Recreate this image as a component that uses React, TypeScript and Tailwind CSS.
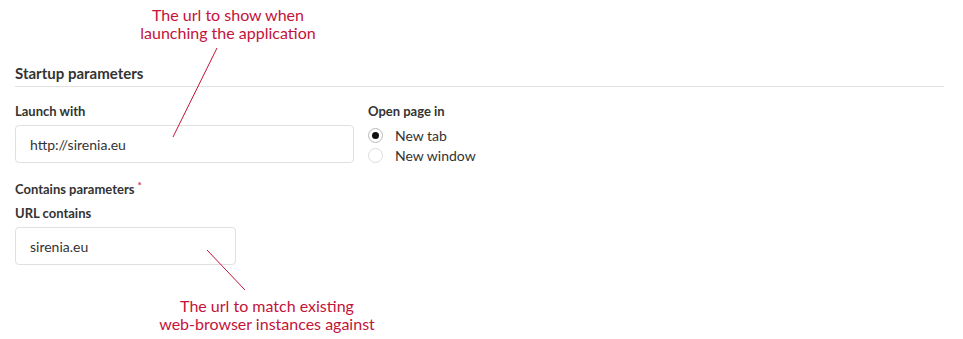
import { useState } from 'react'

const red = 'text-[#c4123a]'

function Radio({ checked, label, onClick }: { checked: boolean; label: string; onClick: () => void }) {
  return (
    <button type="button" onClick={onClick} className="flex items-center h-[20px] gap-[12px] text-left">
      <span
        className={`w-[15px] h-[15px] rounded-full border flex items-center justify-center bg-white ${
          checked ? 'border-[#bbb]' : 'border-[#ddd]'
        }`}
      >
        {checked && <span className="w-[7px] h-[7px] rounded-full bg-[#111]" />}
      </span>
      <span className="text-[14px] text-[#333]">{label}</span>
    </button>
  )
}

export default function App() {
  const [target, setTarget] = useState<'tab' | 'window'>('tab')
  const [launch, setLaunch] = useState('http://sirenia.eu')
  const [contains, setContains] = useState('sirenia.eu')

  return (
    <div className="relative w-[963px] h-[339px] bg-white font-['Lato',sans-serif] text-[#333] overflow-hidden">
      {/* top callout */}
      <div className={`pt-[6px] ml-[78px] w-[300px] text-center text-[16px] leading-[18px] ${red}`}>
        <p>The url to show when</p>
        <p>launching the application</p>
      </div>

      <div className="pl-[15px] pr-[19px]">
        <h2 className="mt-[22px] pb-[4px] text-[15px] leading-[18px] font-bold border-b border-[#e2e2e2]">
          Startup parameters
        </h2>

        <div className="flex items-start gap-[14px] mt-[16px]">
          <div className="w-[339px]">
            <label className="block text-[13px] leading-[16px] font-bold mb-[6px]">Launch with</label>
            <input
              value={launch}
              onChange={e => setLaunch(e.target.value)}
              className="w-full h-[38px] px-[14px] text-[14px] border border-[#e0e0e0] rounded-[4px] outline-none"
            />
          </div>
          <div className="h-[60px]">
            <p className="text-[13px] leading-[16px] font-bold">Open page in</p>
            <div className="mt-[6px] flex flex-col">
              <Radio checked={target === 'tab'} label="New tab" onClick={() => setTarget('tab')} />
              <Radio checked={target === 'window'} label="New window" onClick={() => setTarget('window')} />
            </div>
          </div>
        </div>

        <p className="mt-[18px] text-[13px] leading-[16px] font-bold">
          Contains parameters
          <span className="relative -top-[5px] ml-[3px] text-[10px] leading-none text-[#d9304f]">*</span>
        </p>
        <label className="block mt-[8px] text-[13px] leading-[16px] font-bold mb-[6px]">URL contains</label>
        <input
          value={contains}
          onChange={e => setContains(e.target.value)}
          className="w-[221px] h-[38px] px-[14px] text-[14px] border border-[#e0e0e0] rounded-[4px] outline-none"
        />
      </div>

      {/* bottom callout */}
      <div className={`mt-[32px] ml-[117px] w-[300px] text-center text-[16px] leading-[18px] ${red}`}>
        <p>The url to match existing</p>
        <p>web-browser instances against</p>
      </div>

      {/* pointer lines */}
      <svg className="absolute inset-0 pointer-events-none" width="963" height="339">
        <line x1="217" y1="48" x2="173" y2="137" stroke="#c4123a" strokeWidth="1" />
        <line x1="207" y1="250" x2="245" y2="290" stroke="#c4123a" strokeWidth="1" />
      </svg>
    </div>
  )
}
